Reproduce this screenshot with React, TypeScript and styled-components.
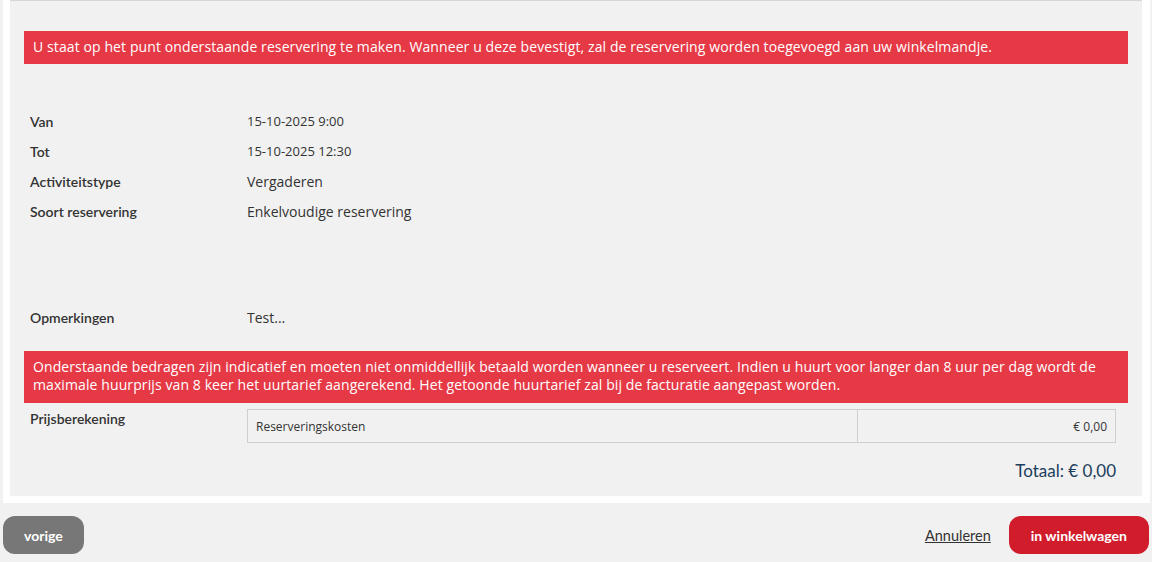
import React from "react";
import styled, { createGlobalStyle } from "styled-components";

const GlobalStyle = createGlobalStyle`
  html, body {
    margin: 0;
    padding: 0;
    background: #f1f1f1;
  }
  body {
    font-family: "Open Sans", "Liberation Sans", sans-serif;
    color: #333;
  }
`;

const Page = styled.div`
  width: 1152px;
  height: 562px;
  overflow: hidden;
  background: #f1f1f1;
`;

const Frame = styled.div`
  margin-left: 3px;
  width: 1147px;
  background: #fff;
  padding: 0 8px 7px 7px;
  box-sizing: border-box;
`;

const Panel = styled.div`
  background: #f1f1f1;
  border-top: 1px solid #d6d6d6;
  padding: 30px 14px 15px 14px;
`;

const Alert = styled.div<{ $bottom?: number }>`
  background: #e63946;
  color: #fff;
  font-size: 14px;
  line-height: 18px;
  letter-spacing: 0.1px;
  padding: 7px 9px ${(p) => p.$bottom ?? 8}px;
  font-weight: 400;
`;

const Details = styled.div<{ $top: number }>`
  margin-top: ${(p) => p.$top}px;
  padding-left: 6px;
  padding-right: 12px;
`;

const Row = styled.div<{ $align?: string }>`
  display: grid;
  grid-template-columns: 217px 1fr;
  align-items: ${(p) => p.$align || "center"};
  min-height: 30px;
`;

const Label = styled.div`
  font-family: "Lato", "Liberation Sans", sans-serif;
  font-weight: 600;
  font-size: 14px;
  color: #333;
`;

const Value = styled.div<{ $small?: boolean }>`
  font-size: ${(p) => (p.$small ? "13px" : "14px")};
  color: #333;
`;

const Spacer = styled.div<{ $h: number }>`
  height: ${(p) => p.$h}px;
`;

const PriceTable = styled.div`
  display: grid;
  grid-template-columns: 609px 1fr;
  border: 1px solid #cfcfcf;
  margin-top: 6px;
`;

const Cell = styled.div<{ $right?: boolean }>`
  height: 32px;
  display: flex;
  align-items: center;
  padding: 0 8px;
  font-size: 12px;
  color: #333;
  justify-content: ${(p) => (p.$right ? "flex-end" : "flex-start")};
  border-left: ${(p) => (p.$right ? "1px solid #cfcfcf" : "none")};
`;

const PriceLabel = styled(Label)`
  padding-top: 7px;
`;

const Total = styled.div`
  text-align: right;
  font-family: "Lato", "Liberation Sans", sans-serif;
  font-size: 17px;
  color: #1b3d5c;
  margin-top: 17px;
`;

const Footer = styled.div`
  display: flex;
  align-items: center;
  padding: 13px 3px 0 3px;
`;

const Button = styled.button<{ $variant: "grey" | "red" }>`
  height: 38px;
  border: none;
  border-radius: 12px;
  padding: 0 ${(p) => (p.$variant === "red" ? 22 : 21)}px;
  font-family: "Lato", "Liberation Sans", sans-serif;
  font-weight: 700;
  font-size: 14px;
  color: #fff;
  background: ${(p) => (p.$variant === "red" ? "#d01c2b" : "#777")};
  cursor: pointer;
`;

const Actions = styled.div`
  margin-left: auto;
  display: flex;
  align-items: center;
  gap: 18px;
`;

const CancelLink = styled.a`
  font-family: "Lato", "Liberation Sans", sans-serif;
  font-size: 14.5px;
  color: #333;
  text-decoration: underline;
  cursor: pointer;
`;

export default function App() {
  return (
    <Page>
      <GlobalStyle />
      <Frame>
        <Panel>
          <Alert>
            U staat op het punt onderstaande reservering te maken. Wanneer u deze bevestigt, zal de reservering worden
            toegevoegd aan uw winkelmandje.
          </Alert>
          <Details $top={42}>
            <Row>
              <Label>Van</Label>
              <Value $small>15-10-2025 9:00</Value>
            </Row>
            <Row>
              <Label>Tot</Label>
              <Value $small>15-10-2025 12:30</Value>
            </Row>
            <Row>
              <Label>Activiteitstype</Label>
              <Value>Vergaderen</Value>
            </Row>
            <Row>
              <Label>Soort reservering</Label>
              <Value>Enkelvoudige reservering</Value>
            </Row>
            <Spacer $h={76} />
            <Row>
              <Label>Opmerkingen</Label>
              <Value>Test...</Value>
            </Row>
          </Details>
          <Spacer $h={19} />
          <Alert $bottom={9}>
            Onderstaande bedragen zijn indicatief en moeten niet onmiddellijk betaald worden wanneer u reserveert. Indien
            u huurt voor langer dan 8 uur per dag wordt de maximale huurprijs van 8 keer het uurtarief aangerekend. Het
            getoonde huurtarief zal bij de facturatie aangepast worden.
          </Alert>
          <Details $top={0}>
            <Row $align="start">
              <PriceLabel>Prijsberekening</PriceLabel>
              <PriceTable>
                <Cell>Reserveringskosten</Cell>
                <Cell $right>€ 0,00</Cell>
              </PriceTable>
            </Row>
            <Total>Totaal: € 0,00</Total>
          </Details>
        </Panel>
      </Frame>
      <Footer>
        <Button $variant="grey">vorige</Button>
        <Actions>
          <CancelLink>Annuleren</CancelLink>
          <Button $variant="red">in winkelwagen</Button>
        </Actions>
      </Footer>
    </Page>
  );
}
